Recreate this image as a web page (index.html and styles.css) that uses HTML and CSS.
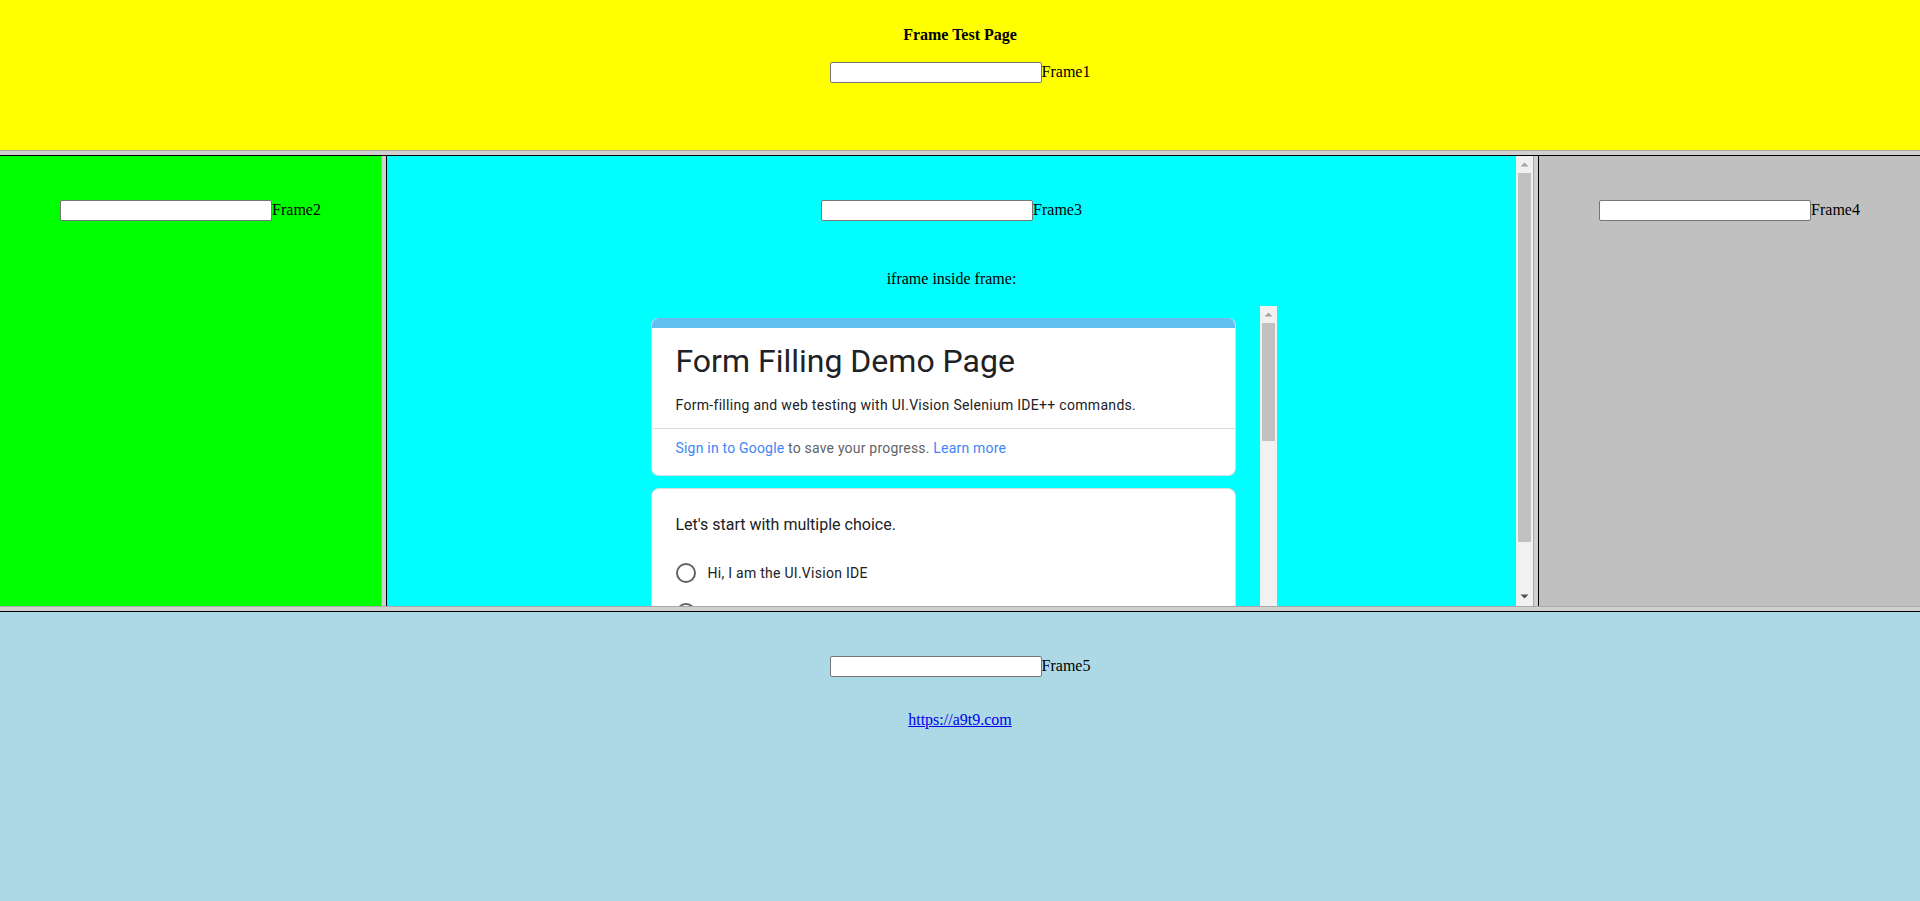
FILE: index.html
```
<!DOCTYPE html>
<html lang="en">
<head>
<meta charset="utf-8">
<title>Frame Test Page</title>
<link rel="stylesheet" href="styles.css">
</head>
<body>
<div class="frameset">
  <section class="frame frame-top">
    <div class="title">Frame Test Page</div>
    <div class="row row-top"><input class="field" type="text"><span class="lbl">Frame1</span></div>
  </section>
  <div class="hborder"></div>
  <div class="middle">
    <section class="frame frame2">
      <div class="row"><input class="field" type="text"><span class="lbl">Frame2</span></div>
    </section>
    <div class="vborder"></div>
    <section class="frame frame3">
      <div class="f3-content">
        <div class="row"><input class="field" type="text"><span class="lbl">Frame3</span></div>
        <p class="iframe-caption">iframe inside frame:</p>
        <div class="iframe-box">
          <div class="iframe-content">
            <div class="card card-head">
              <div class="card-stripe"></div>
              <div class="card-body">
                <div class="form-title">Form Filling Demo Page</div>
                <div class="form-desc">Form-filling and web testing with UI.Vision Selenium IDE++ commands.</div>
              </div>
              <div class="card-foot"><a class="g-link" href="#">Sign in to Google</a> to save your progress. <a class="g-link" href="#">Learn more</a></div>
            </div>
            <div class="card card-q">
              <div class="question">Let's start with multiple choice.</div>
              <label class="radio-row"><span class="radio"></span><span class="radio-label">Hi, I am the UI.Vision IDE</span></label>
              <label class="radio-row"><span class="radio"></span><span class="radio-label">I am a web testing tool</span></label>
              <label class="radio-row"><span class="radio"></span><span class="radio-label">Other</span></label>
            </div>
          </div>
          <div class="scrollbar">
            <div class="sb-btn"><svg width="17" height="17" viewBox="0 0 17 17"><polygon points="4.5,10.5 8.5,6.5 12.5,10.5" fill="#a3a3a3"/></svg></div>
            <div class="sb-thumb sb-thumb-inner"></div>
          </div>
        </div>
      </div>
      <div class="scrollbar scrollbar-frame">
        <div class="sb-btn"><svg width="17" height="17" viewBox="0 0 17 17"><polygon points="4.5,10.5 8.5,6.5 12.5,10.5" fill="#a3a3a3"/></svg></div>
        <div class="sb-thumb sb-thumb-frame"></div>
        <div class="sb-spacer"></div>
        <div class="sb-btn"><svg width="17" height="17" viewBox="0 0 17 17"><polygon points="4.5,5.5 12.5,5.5 8.5,9.5" fill="#505050"/></svg></div>
      </div>
    </section>
    <div class="vborder"></div>
    <section class="frame frame4">
      <div class="row"><input class="field" type="text"><span class="lbl">Frame4</span></div>
    </section>
  </div>
  <div class="hborder"></div>
  <section class="frame frame5">
    <div class="row"><input class="field" type="text"><span class="lbl">Frame5</span></div>
    <p class="link-line"><a class="site-link" href="#">https://a9t9.com</a></p>
  </section>
</div>
</body>
</html>
```
FILE: styles.css
```
html, body {
  margin: 0;
  padding: 0;
  height: 901px;
  overflow: hidden;
}
body {
  font-family: "Liberation Serif", "Times New Roman", serif;
  font-size: 16px;
  color: #000;
}
.frameset {
  display: flex;
  flex-direction: column;
  height: 901px;
}
.frame {
  box-sizing: border-box;
  overflow: hidden;
}
.frame-top {
  height: 150px;
  background: #ffff00;
  flex: none;
  text-align: center;
}
.title {
  font-weight: bold;
  line-height: 18px;
  padding-top: 26px;
}
.hborder {
  flex: none;
  height: 4px;
  background: #d0d0d0;
  border-top: 1px solid #aaaaaa;
  border-bottom: 1px solid #000000;
}
.vborder {
  flex: none;
  width: 4px;
  background: #d0d0d0;
  border-left: 1px solid #aaaaaa;
  border-right: 1px solid #000000;
}
.middle {
  flex: none;
  height: 450px;
  display: flex;
}
.frame2 {
  width: 381px;
  flex: none;
  background: #00ff00;
}
.frame3 {
  width: 1146px;
  flex: none;
  background: #00ffff;
  display: flex;
}
.frame4 {
  width: 381px;
  flex: none;
  background: #c0c0c0;
}
.frame5 {
  flex: 1;
  background: #add8e6;
  text-align: center;
}
.row {
  display: flex;
  justify-content: center;
  align-items: flex-start;
  height: 21px;
  margin-top: 44px;
}
.row-top {
  margin-top: 18px;
}
.field {
  box-sizing: border-box;
  width: 212px;
  height: 21px;
  margin: 0;
  padding: 1px 2px;
  border: 1px solid #767676;
  border-radius: 2px;
  background: #ffffff;
  font: 13.33px "Liberation Sans", Arial, sans-serif;
}
.lbl {
  line-height: 20px;
  white-space: nowrap;
}
.f3-content {
  flex: 1;
  overflow: hidden;
  text-align: center;
}
.iframe-caption {
  margin: 49px 0 0;
  line-height: 18px;
}
.iframe-box {
  width: 650px;
  height: 520px;
  margin: 18px auto 0;
  display: flex;
  text-align: left;
}
.iframe-content {
  flex: 1;
  padding: 12px 24px 0;
  font-family: Roboto, "Noto Sans", Arial, sans-serif;
  color: #202124;
}
.scrollbar {
  width: 17px;
  flex: none;
  background: #f1f1f1;
  display: flex;
  flex-direction: column;
}
.sb-btn {
  height: 17px;
  flex: none;
}
.sb-btn svg {
  display: block;
}
.sb-thumb {
  margin: 0 2px;
  background: #c1c1c1;
  flex: none;
}
.sb-thumb-inner {
  height: 118px;
}
.sb-thumb-frame {
  height: 369px;
}
.sb-spacer {
  flex: 1;
}
.card {
  background: #ffffff;
  border: 1px solid #dadce0;
  border-radius: 8px;
  overflow: hidden;
}
.card-head {
  border-top: none;
}
.card-stripe {
  height: 10px;
  background: #63bef1;
  margin: 0 -1px;
}
.card-body {
  padding: 13px 24px 13px;
  border-bottom: 1px solid #dadce0;
}
.form-title {
  font-size: 32px;
  line-height: 40px;
  color: #202124;
}
.form-desc {
  font-size: 14px;
  line-height: 20px;
  margin-top: 14px;
  color: #202124;
  letter-spacing: 0.3px;
}
.card-foot {
  padding: 9px 24px 17px;
  font-size: 14px;
  line-height: 20px;
  color: #5f6368;
  letter-spacing: 0.2px;
}
.g-link {
  color: #4285f4;
  text-decoration: none;
}
.card-q {
  margin-top: 12px;
  padding: 24px 24px 24px;
}
.question {
  font-size: 16px;
  line-height: 24px;
  color: #202124;
  margin-bottom: 26px;
}
.radio-row {
  display: flex;
  align-items: flex-start;
  height: 40px;
}
.radio {
  box-sizing: border-box;
  width: 20px;
  height: 20px;
  border: 2px solid #5f6368;
  border-radius: 50%;
  flex: none;
}
.radio-label {
  margin-left: 12px;
  font-size: 14px;
  line-height: 20px;
  color: #202124;
  letter-spacing: 0.27px;
}
.link-line {
  margin: 34px 0 0;
  line-height: 18px;
}
.site-link {
  color: #0000ee;
  text-decoration: underline;
}
```
